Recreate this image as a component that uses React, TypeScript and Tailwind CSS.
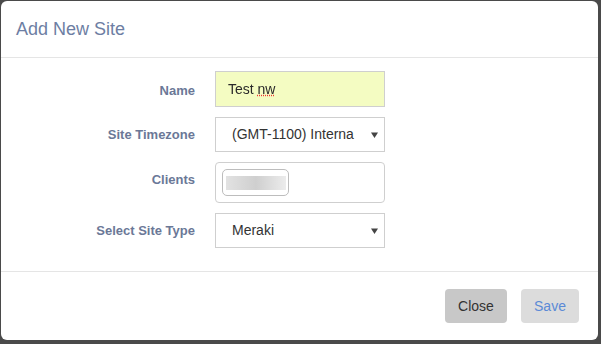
import React from "react";

const Arrow = () => (
  <svg width="7" height="6" viewBox="0 0 7 6" className="absolute right-[6px] top-1/2 -translate-y-1/2">
    <path d="M0 0.5 L7 0.5 L3.5 6 Z" fill="#444" />
  </svg>
);

export default function App() {
  const label = "w-[194px] text-right text-[13px] font-bold text-[#6b7897] shrink-0";
  return (
    <div
      className="w-[601px] h-[344px] bg-[#4a4a4a] pl-[1px] pt-[1px]"
      style={{ fontFamily: '"Liberation Sans", Arial, sans-serif' }}
    >
      <div className="w-[597px] h-[339px] bg-white rounded-[6px] flex flex-col">
        <div className="h-[57px] border-b border-[#e5e5e5] flex items-center pl-[15px] shrink-0">
          <span className="text-[18px] text-[#6d7ea3] leading-none mt-[-1px]">Add New Site</span>
        </div>
        <div className="flex flex-col pt-[13px] gap-[10px] h-[214px] border-b border-[#e5e5e5] shrink-0">
          <div className="flex items-center">
            <div className={`${label} pt-[3px]`}>Name</div>
            <div className="ml-[20px] w-[170px] h-[36px] border border-[#cfcfcf] bg-[#f4fcc2] flex items-center pl-[12px] text-[14px]">
              <span className="blur-[0.6px] text-[#2a2a2a]">Test <span className="underline decoration-dotted decoration-[#e33]">nw</span></span>
            </div>
          </div>
          <div className="flex items-center">
            <div className={label}>Site Timezone</div>
            <div className="relative ml-[20px] w-[170px] h-[35px] border border-[#cfcfcf] bg-white flex items-center pl-[16px] text-[14px] text-[#333] overflow-hidden whitespace-nowrap">
              <span>(GMT-1100) Interna</span>
              <Arrow />
            </div>
          </div>
          <div className="flex items-center">
            <div className={`${label} self-start pt-[8px]`}>Clients</div>
            <div className="ml-[20px] w-[170px] h-[41px] border border-[#cfcfcf] rounded-[4px] bg-white flex items-center pl-[6px]">
              <div className="w-[67px] h-[27px] border border-[#bdbdbd] rounded-[5px] flex items-center pl-[3px]">
                <div className="w-[60px] h-[14px] bg-gradient-to-r from-[#e2e2e2] via-[#cfcfcf] to-[#ececec] blur-[0.5px]" />
              </div>
            </div>
          </div>
          <div className="flex items-center">
            <div className={label}>Select Site Type</div>
            <div className="relative ml-[20px] w-[170px] h-[35px] border border-[#cfcfcf] bg-white flex items-center pl-[16px] text-[14px] text-[#333]">
              <span>Meraki</span>
              <Arrow />
            </div>
          </div>
        </div>
        <div className="flex-1 flex items-center justify-end gap-[14px] pr-[19px]">
          <button className="w-[62px] h-[34px] rounded-[4px] bg-[#c8c8c8] text-[14px] text-[#333]">Close</button>
          <button className="w-[58px] h-[34px] rounded-[4px] bg-[#dcdcdc] text-[14px] text-[#5b8ad6]">Save</button>
        </div>
      </div>
    </div>
  );
}
